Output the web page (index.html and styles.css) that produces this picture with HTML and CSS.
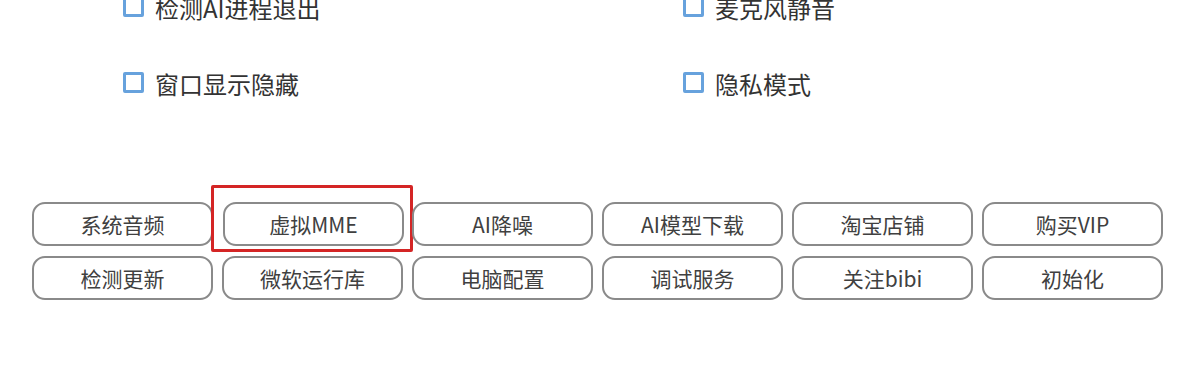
FILE: index.html
```html
<!DOCTYPE html>
<html lang="zh-CN">
<head>
<meta charset="utf-8">
<title>设置</title>
<link rel="stylesheet" href="styles.css">
</head>
<body>
<div class="page">
  <div class="checks">
    <label class="check"><span class="box"></span><span class="label">检测AI进程退出</span></label>
    <label class="check"><span class="box"></span><span class="label">麦克风静音</span></label>
    <label class="check"><span class="box"></span><span class="label">窗口显示隐藏</span></label>
    <label class="check"><span class="box"></span><span class="label">隐私模式</span></label>
  </div>
  <div class="buttons">
    <div class="btn">系统音频</div>
    <div class="btn highlighted">虚拟MME<span class="mark"></span></div>
    <div class="btn">AI降噪</div>
    <div class="btn">AI模型下载</div>
    <div class="btn">淘宝店铺</div>
    <div class="btn">购买VIP</div>
    <div class="btn">检测更新</div>
    <div class="btn">微软运行库</div>
    <div class="btn">电脑配置</div>
    <div class="btn">调试服务</div>
    <div class="btn">关注bibi</div>
    <div class="btn">初始化</div>
  </div>
</div>
</body>
</html>
```

FILE: styles.css
```css
html, body {
  margin: 0;
  padding: 0;
  background: #ffffff;
}
body {
  font-family: "Noto Sans CJK SC", "Noto Sans", sans-serif;
  width: 1199px;
  height: 380px;
  overflow: hidden;
}
.page {
  display: flex;
  flex-direction: column;
}
.checks {
  display: grid;
  grid-template-columns: 560px 560px;
  row-gap: 55px;
  margin-top: -4px;
  padding-left: 123px;
}
.check {
  display: flex;
  align-items: center;
  gap: 11px;
  height: 21px;
}
.box {
  width: 21px;
  height: 21px;
  box-sizing: border-box;
  border: 3px solid #67a2dd;
  border-radius: 2px;
  background: #fff;
  flex: none;
}
.label {
  font-size: 24px;
  color: #333333;
  line-height: 21px;
  position: relative;
  top: 1px;
}
.buttons {
  display: grid;
  grid-template-columns: repeat(6, 181px);
  grid-auto-rows: 44px;
  column-gap: 9px;
  row-gap: 10px;
  margin-top: 109px;
  padding-left: 32px;
}
.btn {
  position: relative;
  box-sizing: border-box;
  border: 2px solid #8a8a8a;
  border-radius: 13px;
  display: flex;
  align-items: center;
  justify-content: center;
  font-size: 21px;
  color: #404040;
  background: #fff;
}
.highlighted {
  margin-left: 1px;
  margin-right: -1px;
}
.mark {
  position: absolute;
  top: -19px;
  left: -14px;
  right: -11px;
  bottom: -8px;
  border: 3px solid #d42525;
  border-radius: 2px;
  pointer-events: none;
}
```
